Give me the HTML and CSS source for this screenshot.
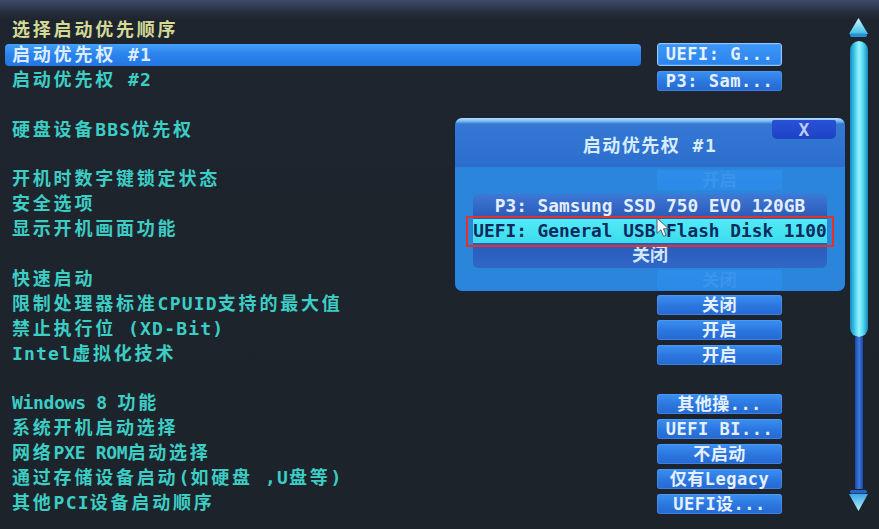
FILE: index.html
```html
<!DOCTYPE html>
<html lang="zh-CN">
<head>
<meta charset="utf-8">
<title>BIOS</title>
<link rel="stylesheet" href="styles.css">
</head>
<body>
<div class="screen">
  <div class="list">
    <div class="row title"><span class="label">选择启动优先顺序</span></div>
    <div class="row active"><span class="label">启动优先权<span class="en"> #1</span></span><span class="val sel">UEFI: G...</span></div>
    <div class="row"><span class="label">启动优先权<span class="en"> #2</span></span><span class="val">P3: Sam...</span></div>
    <div class="row"></div>
    <div class="row"><span class="label">硬盘设备<span class="en">BBS</span>优先权</span></div>
    <div class="row"></div>
    <div class="row"><span class="label">开机时数字键锁定状态</span><span class="val">开启</span></div>
    <div class="row"><span class="label">安全选项</span></div>
    <div class="row"><span class="label">显示开机画面功能</span></div>
    <div class="row"></div>
    <div class="row"><span class="label">快速启动</span><span class="val">关闭</span></div>
    <div class="row"><span class="label">限制处理器标准<span class="en">CPUID</span>支持的最大值</span><span class="val">关闭</span></div>
    <div class="row"><span class="label">禁止执行位<span class="en"> (XD-Bit)</span></span><span class="val">开启</span></div>
    <div class="row"><span class="label"><span class="en">Intel</span>虚拟化技术</span><span class="val">开启</span></div>
    <div class="row"></div>
    <div class="row"><span class="label"><span class="en tight">Windows 8 </span>功能</span><span class="val">其他操...</span></div>
    <div class="row"><span class="label">系统开机启动选择</span><span class="val">UEFI BI...</span></div>
    <div class="row"><span class="label">网络<span class="en tight">PXE ROM</span>启动选择</span><span class="val">不启动</span></div>
    <div class="row"><span class="label">通过存储设备启动<span class="en">(</span>如硬盘<span class="en"> ,U</span>盘等<span class="en">)</span></span><span class="val">仅有Legacy</span></div>
    <div class="row"><span class="label">其他<span class="en">PCI</span>设备启动顺序</span><span class="val">UEFI设...</span></div>
  </div>

  <div class="scroll">
    <svg class="arrow" viewBox="0 0 23 21" width="23" height="21">
      <defs>
        <linearGradient id="gu" x1="0" y1="0" x2="0" y2="1">
          <stop offset="0" stop-color="#d4fbff"/>
          <stop offset="1" stop-color="#3cbde6"/>
        </linearGradient>
      </defs>
      <polygon points="11.5,1 21,17 2,17" fill="url(#gu)"/>
      <rect x="3" y="16.5" width="17" height="3.5" rx="1.7" fill="#2b8fd2"/>
    </svg>
    <div class="thumb"></div>
    <div class="track"></div>
    <svg class="arrow" viewBox="0 0 23 23" width="23" height="23">
      <defs>
        <linearGradient id="gd" x1="0" y1="0" x2="0" y2="1">
          <stop offset="0" stop-color="#3aa6e6"/>
          <stop offset="1" stop-color="#b8f2ff"/>
        </linearGradient>
      </defs>
      <rect x="3" y="1" width="17" height="3.5" rx="1.7" fill="#2a62c8"/>
      <polygon points="2,5 21,5 11.5,22" fill="url(#gd)"/>
    </svg>
  </div>

  <div class="modal">
    <div class="modal-head">启动优先权 #1</div>
    <div class="close">X</div>
    <div class="modal-body">
      <div class="options">
        <div class="opt opt1">P3: Samsung SSD 750 EVO 120GB</div>
        <div class="opt opt2">UEFI: General USB Flash Disk 1100</div>
        <div class="opt opt3">关闭</div>
      </div>
    </div>
  </div>

  <svg class="cursor" viewBox="0 0 14 21" width="14" height="21">
    <path d="M1 1 L1 16.5 L4.8 12.8 L7.6 19.4 L10.2 18.3 L7.5 11.8 L12.6 11.8 Z" fill="#f4f8ff" stroke="#4a5a78" stroke-width="1" stroke-linejoin="round"/>
  </svg>
</div>
</body>
</html>
```

FILE: styles.css
```css
* { box-sizing: border-box; }

html, body {
  margin: 0;
  padding: 0;
}

body {
  width: 879px;
  height: 529px;
  overflow: hidden;
  background: #1d232b;
}

.screen {
  position: relative;
  width: 879px;
  height: 529px;
  display: flex;
  align-items: flex-start;
  background: linear-gradient(to bottom, #3d4a6a 0px, #323d57 6px, #252d3b 13px, #1f252e 20px, #1d232b 100%);
  font-family: "DejaVu Sans Mono", "Noto Sans CJK SC", monospace;
  font-weight: 700;
}

/* ---------- left list ---------- */
.list {
  width: 782px;
  padding: 17.5px 0 0 5px;
  display: flex;
  flex-direction: column;
  flex: none;
}

.row {
  height: 24.9px;
  display: grid;
  grid-template-columns: 636px 125px;
  column-gap: 16px;
  align-items: center;
}

.label {
  grid-column: 1;
  padding-left: 7px;
  font-size: 18px;
  letter-spacing: 2.8px;
  line-height: 22px;
  height: 22px;
  color: #3ccdc4;
  white-space: nowrap;
}

.label .en {
  letter-spacing: 1.2px;
}

.label .en.tight {
  letter-spacing: -0.3px;
}

.title .label {
  color: #d3d996;
}

.active .label {
  background: linear-gradient(#44a0f8, #2c84ee 45%, #2476e2);
  color: #dcecff;
  border-radius: 4px;
}

.val {
  grid-column: 2;
  height: 20px;
  margin-top: 2px;
  border-radius: 3px;
  background: linear-gradient(#3b90f2, #2b76de 55%, #2569d2);
  box-shadow: inset 0 0 0 1px rgba(110, 170, 255, 0.35);
  color: #e6f0ff;
  font-size: 17px;
  letter-spacing: 0.5px;
  line-height: 20px;
  text-align: center;
  white-space: nowrap;
}

.val.sel {
  height: 23px;
  margin-top: 0;
  line-height: 21px;
  border: 1px solid #8ccaff;
  background: linear-gradient(#3d96f6, #2a84ee);
}

/* ---------- scrollbar ---------- */
.scroll {
  margin-left: 65px;
  margin-top: 17px;
  width: 23px;
  height: 495px;
  display: flex;
  flex-direction: column;
  align-items: center;
  flex: none;
}

.arrow {
  display: block;
  flex: none;
}

.thumb {
  width: 18px;
  height: 296px;
  margin-top: 3px;
  border-radius: 9px;
  background: linear-gradient(to right, #1a88bc 0%, #3cc8e8 25%, #9cf4ff 50%, #48d6ee 75%, #1a86ba 100%);
  flex: none;
}

.track {
  width: 8px;
  flex: 1;
  background: linear-gradient(to right, #1c44a4, #3a7ae2 50%, #1c44a4);
}

/* ---------- modal ---------- */
.modal {
  position: absolute;
  left: 455px;
  top: 118px;
  width: 390px;
  height: 173px;
  border-radius: 7px;
  overflow: hidden;
  display: flex;
  flex-direction: column;
  box-shadow: 0 0 0 1px rgba(16, 34, 80, 0.7);
}

.modal-head {
  height: 49px;
  flex: none;
  padding-top: 16px;
  background: linear-gradient(#b6defa 0px, #80bdf0 3px, #3478d4 6px, #2d6ecc 100%);
  color: #d8ecff;
  font-size: 18px;
  letter-spacing: 1.5px;
  line-height: 24px;
  text-align: center;
  white-space: nowrap;
}

.close {
  position: absolute;
  right: 9px;
  top: 2px;
  width: 64px;
  height: 19px;
  border-radius: 2px 2px 5px 5px;
  background: linear-gradient(#2a52d6, #1e42c4);
  color: #bccbf6;
  font-size: 18px;
  line-height: 19px;
  text-align: center;
}

.modal-body {
  flex: 1;
  padding: 27px 18px 0;
  background: rgba(44, 141, 232, 0.93);
}

.options {
  display: flex;
  flex-direction: column;
}

.opt {
  height: 24.5px;
  line-height: 24.5px;
  text-align: center;
  white-space: nowrap;
  font-size: 17.8px;
  color: #e4eeff;
}

.opt1 {
  background: linear-gradient(#3e78d6, #2a58b6);
  border-radius: 5px 5px 0 0;
}

.opt2 {
  position: relative;
  background: linear-gradient(#52eaf6, #3cdcee);
  color: #0b2a5e;
}

.opt2::after {
  content: "";
  position: absolute;
  left: -7px;
  right: -7px;
  top: -3px;
  bottom: -4px;
  border: 2.5px solid #e3322a;
}

.opt3 {
  background: linear-gradient(#2a5aba, #3068c8);
  border-radius: 0 0 5px 5px;
  color: #d2e6ff;
  font-size: 18px;
}

/* ---------- cursor ---------- */
.cursor {
  position: absolute;
  left: 656px;
  top: 217px;
}
```
